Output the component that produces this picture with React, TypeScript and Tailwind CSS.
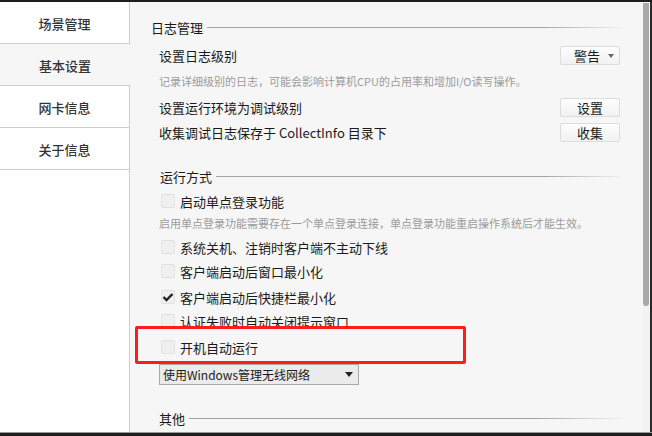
const font = { fontFamily: '"Noto Sans CJK SC", "Noto Sans", sans-serif' };

const navItems = ["场景管理", "基本设置", "网卡信息", "关于信息"];

function SectionTitle({ text, className }: { text: string; className: string }) {
  return (
    <div className={`flex h-5 items-center gap-[4px] pr-[18px] ${className}`}>
      <span className="text-[13px] leading-none text-[#1a1a1a]">{text}</span>
      <div className="h-px flex-1 bg-linear-to-r from-[#a3a3a3] from-80% to-transparent" />
    </div>
  );
}

function Btn({ label, arrow }: { label: string; arrow?: boolean }) {
  return (
    <button className="flex h-[19px] w-[60px] items-center justify-center gap-[8px] rounded-[2px] border border-[#dcdcdc] bg-linear-to-b from-[#fefefe] to-[#f1f1f1] text-[13px] leading-none text-[#1a1a1a]">
      <span className={arrow ? "ml-[8px]" : ""}>{label}</span>
      {arrow && <span className="h-0 w-0 border-x-[3.5px] border-t-[4px] border-x-transparent border-t-[#666]" />}
    </button>
  );
}

function Check({ label, checked, className }: { label: string; checked?: boolean; className: string }) {
  return (
    <div className={`flex h-5 items-center gap-[5px] pl-[31px] ${className}`}>
      <span className="flex h-[14px] w-[14px] items-center justify-center rounded-[2px] border border-[#e2e2e2] bg-[#efefef]">
        {checked && (
          <svg width="12" height="12" viewBox="0 0 12 12">
            <path d="M1.5 6 L4.5 9 L10.5 3" fill="none" stroke="#1e1e1e" strokeWidth="2.4" />
          </svg>
        )}
      </span>
      <span className="text-[13px] leading-none text-[#1a1a1a]">{label}</span>
    </div>
  );
}

export default function App() {
  return (
    <div className="flex h-[436px] w-[652px] flex-col bg-[#1e1e1e]" style={font}>
      <div className="h-[2px]" />
      <div className="flex flex-1 overflow-hidden">
        {/* sidebar */}
        <div className="flex w-[130px] flex-col bg-white">
          {navItems.map((item, i) => (
            <div
              key={item}
              className={`flex h-[42px] items-center justify-center border-b border-[#cdcdcd] pt-[2px] text-[13px] font-medium text-[#333] ${
                i === 1 ? "bg-[#f6f6f6]" : "border-r"
              } ${i === 0 ? "h-[41px]" : ""}`}
            >
              {item}
            </div>
          ))}
          <div className="flex-1 border-r border-[#cdcdcd]" />
        </div>

        {/* main */}
        <div className="relative flex flex-1 flex-col bg-[#f6f6f6]">
          <SectionTitle text="日志管理" className="mt-[15px] pl-[21px]" />

          <div className="mt-[8px] flex h-[21px] items-center justify-between pl-[29px] pr-[23px]">
            <span className="text-[13px] leading-none text-[#1a1a1a]">设置日志级别</span>
            <Btn label="警告" arrow />
          </div>
          <div className="mt-[6px] flex h-[18px] items-center pl-[29px] text-[11px] leading-none text-[#9b9b9b]">
            记录详细级别的日志，可能会影响计算机CPU的占用率和增加I/O读写操作。
          </div>
          <div className="mt-[7px] flex h-5 items-center justify-between pl-[29px] pr-[23px]">
            <span className="text-[13px] leading-none text-[#1a1a1a]">设置运行环境为调试级别</span>
            <Btn label="设置" />
          </div>
          <div className="mt-[5px] flex h-5 items-center justify-between pl-[29px] pr-[23px]">
            <span className="text-[13px] leading-none text-[#1a1a1a]">收集调试日志保存于 CollectInfo 目录下</span>
            <Btn label="收集" />
          </div>

          <SectionTitle text="运行方式" className="mt-[24px] pl-[30px]" />
          <Check label="启动单点登录功能" className="mt-[5px]" />
          <div className="mt-[3px] flex h-[18px] items-center pl-[29px] text-[11px] leading-none text-[#9b9b9b]">
            启用单点登录功能需要存在一个单点登录连接，单点登录功能重启操作系统后才能生效。
          </div>
          <Check label="系统关机、注销时客户端不主动下线" className="mt-[5px]" />
          <Check label="客户端启动后窗口最小化" className="mt-[4px]" />
          <Check label="客户端启动后快捷栏最小化" checked className="mt-[6px]" />
          <Check label="认证失败时自动关闭提示窗口" className="mt-[4px]" />
          <Check label="开机自动运行" className="mt-[6px]" />

          <div className="mt-[7px] pl-[29px]">
            <div className="flex h-[21px] w-[200px] items-center justify-between border border-[#a9a9a9] bg-[#ebebeb] pl-[3px] pr-[5px] text-[12px] leading-none text-[#1a1a1a]">
              <span>使用Windows管理无线网络</span>
              <span className="h-0 w-0 border-x-[4px] border-t-[5px] border-x-transparent border-t-[#222]" />
            </div>
          </div>

          <SectionTitle text="其他" className="mt-[23px] pl-[29px]" />

          {/* annotation box */}
          <div className="absolute left-[5px] top-[324px] h-[38px] w-[331px] rounded-[2px] border-[3px] border-[#ff1c1c]" />
        </div>

        {/* scrollbar */}
        <div className="flex w-[7px] flex-col bg-[#f3f3f3]">
          <div className="mt-[1px] h-[303px] w-[6px] rounded-b-[3px] bg-[#a9a9a9]" />
        </div>
        <div className="w-[2px] bg-[#2a2a2a]" />
      </div>
      <div className="h-[4px] border-t border-[#999]" />
    </div>
  );
}
